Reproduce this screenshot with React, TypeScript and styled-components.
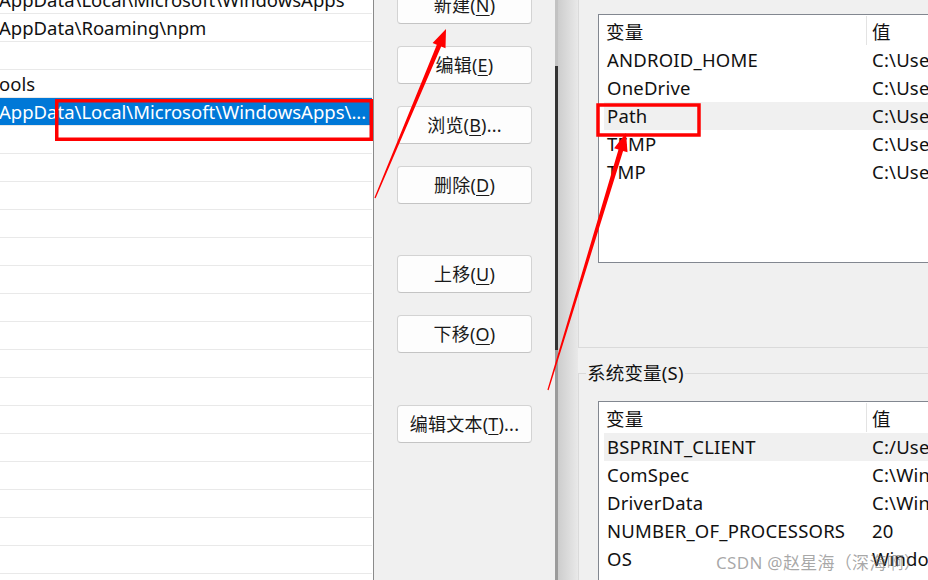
import React from "react";
import styled, { createGlobalStyle } from "styled-components";

const GlobalStyle = createGlobalStyle`
  html, body {
    margin: 0;
    padding: 0;
    width: 928px;
    height: 580px;
    overflow: hidden;
    background: #f0f0f0;
  }
  * { box-sizing: border-box; }
`;

const FONT = `"Noto Sans", "Noto Sans CJK SC", sans-serif`;

const Screen = styled.div`
  position: relative;
  display: flex;
  width: 928px;
  height: 580px;
  overflow: hidden;
  background: #f0f0f0;
  font-family: ${FONT};
  font-size: 18.5px;
  letter-spacing: 0.2px;
  color: #111;
`;

/* ---------- path list on the left ---------- */

const PathList = styled.div`
  flex: none;
  width: 374px;
  background: #fff;
  border-right: 1px solid #8a8a8a;
  overflow: hidden;
  letter-spacing: 0;
`;

const PathRows = styled.div`
  margin-top: -14px;
`;

const PathRow = styled.div<{ $selected?: boolean }>`
  height: 28px;
  margin-right: 1px;
  border-bottom: 1px solid #e9e9e9;
  display: flex;
  align-items: center;
  white-space: nowrap;
  overflow: hidden;
  line-height: 26px;
  text-indent: -1px;
  background: ${(p) => (p.$selected ? "#0078d7" : "transparent")};
  color: ${(p) => (p.$selected ? "#fff" : "inherit")};
`;

/* ---------- button column ---------- */

const ButtonColumn = styled.div`
  flex: none;
  width: 181px;
  display: flex;
  flex-direction: column;
  align-items: flex-start;
  padding-left: 23px;
  background: #f0f0f0;
`;

const ActionButton = styled.button<{ $gap: number }>`
  flex: none;
  margin-top: ${(p) => p.$gap}px;
  width: 135px;
  height: 38px;
  padding: 0;
  border: 1px solid #d3d3d3;
  border-bottom-color: #c4c4c4;
  border-radius: 4px;
  background: #fdfdfd;
  font-family: ${FONT};
  font-size: 18px;
  letter-spacing: 0.2px;
  color: #1a1a1a;
  display: flex;
  align-items: center;
  justify-content: center;
  line-height: 1;

  u {
    text-decoration-thickness: 1px;
    text-underline-offset: 3px;
  }
`;

/* ---------- edge of the window behind ---------- */

const FrameEdge = styled.div`
  flex: none;
  width: 3px;
  display: flex;
  flex-direction: column;
`;

const EdgeSegment = styled.div<{ $color: string; $height?: number }>`
  flex: ${(p) => (p.$height ? `none` : `1`)};
  height: ${(p) => (p.$height ? `${p.$height}px` : "auto")};
  background: ${(p) => p.$color};
`;

const FrameShadow = styled.div`
  flex: none;
  width: 20px;
  background: linear-gradient(to right, #cdcdcd, #e9e9e9);
`;

/* ---------- environment variables window ---------- */

const EnvWindow = styled.div`
  flex: none;
  width: 420px;
  display: flex;
  flex-direction: column;
  background: #f0f0f0;
`;

const GroupBox = styled.div<{ $openTop?: boolean; $gapTop?: number; $padTop: number; $padBottom?: number }>`
  position: relative;
  margin-top: ${(p) => p.$gapTop ?? 0}px;
  border: 1px solid #dadada;
  border-top: ${(p) => (p.$openTop ? "none" : "1px solid #dadada")};
  padding: ${(p) => p.$padTop}px 0 ${(p) => p.$padBottom ?? 0}px 19px;
`;

const GroupTitle = styled.div`
  position: absolute;
  top: -13px;
  left: 7px;
  padding: 0 1px;
  line-height: 24px;
  background: #f0f0f0;
  white-space: nowrap;
`;

const ListBox = styled.div<{ $height: number }>`
  width: 400px;
  height: ${(p) => p.$height}px;
  background: #fff;
  border: 1px solid #828790;
  overflow: hidden;
`;

const ListHeader = styled.div`
  display: grid;
  grid-template-columns: 268px 1fr;
  height: 31px;
`;

const HeaderCell = styled.div<{ $divider?: boolean; $pad: number }>`
  display: flex;
  align-items: center;
  margin: 1px 0;
  padding-left: ${(p) => p.$pad}px;
  border-right: ${(p) => (p.$divider ? "1px solid #e3e3e3" : "none")};
  white-space: nowrap;
`;

const VarRow = styled.div<{ $highlight?: boolean }>`
  display: grid;
  grid-template-columns: 262px 1fr;
  height: 28px;
  margin-left: 5px;
  align-items: center;
  line-height: 26px;
  white-space: nowrap;
  background: ${(p) => (p.$highlight ? "#f0f0f0" : "transparent")};
`;

const VarCell = styled.div<{ $pad: number }>`
  padding-left: ${(p) => p.$pad}px;
  overflow: hidden;
`;

/* ---------- overlays ---------- */

const Watermark = styled.div`
  position: absolute;
  left: 716px;
  top: 552px;
  font-family: ${FONT};
  font-size: 17px;
  letter-spacing: 0.3px;
  line-height: 22px;
  color: rgba(110, 110, 110, 0.6);
  white-space: nowrap;
  pointer-events: none;
`;

const Annotations = styled.svg`
  position: absolute;
  left: 0;
  top: 0;
  width: 928px;
  height: 580px;
  pointer-events: none;
`;

type Pt = [number, number];

function arrowPolygon(tail: Pt, tip: Pt, headLen = 18, headHalf = 7, shaftHalf = 2.4, tailHalf = 0.6): string {
  const dx = tip[0] - tail[0];
  const dy = tip[1] - tail[1];
  const len = Math.hypot(dx, dy);
  const ux = dx / len;
  const uy = dy / len;
  const nx = -uy;
  const ny = ux;
  const bx = tip[0] - ux * headLen;
  const by = tip[1] - uy * headLen;
  const pts: Pt[] = [
    [tail[0] + nx * tailHalf, tail[1] + ny * tailHalf],
    [bx + nx * shaftHalf, by + ny * shaftHalf],
    [bx + nx * headHalf, by + ny * headHalf],
    tip,
    [bx - nx * headHalf, by - ny * headHalf],
    [bx - nx * shaftHalf, by - ny * shaftHalf],
    [tail[0] - nx * tailHalf, tail[1] - ny * tailHalf],
  ];
  return pts.map((p) => `${p[0].toFixed(1)},${p[1].toFixed(1)}`).join(" ");
}

const pathEntries: { text: string; selected?: boolean }[] = [
  { text: "AppData\\Local\\Microsoft\\WindowsApps" },
  { text: "AppData\\Roaming\\npm" },
  { text: "" },
  { text: "ools" },
  { text: "AppData\\Local\\Microsoft\\WindowsApps\\...", selected: true },
  ...Array.from({ length: 17 }, () => ({ text: "" })),
];

const buttons: { label: string; key: string; tail?: string; gap: number }[] = [
  { label: "新建", key: "N", gap: -14 },
  { label: "编辑", key: "E", gap: 22 },
  { label: "浏览", key: "B", tail: "...", gap: 22 },
  { label: "删除", key: "D", gap: 22 },
  { label: "上移", key: "U", gap: 51 },
  { label: "下移", key: "O", gap: 22 },
  { label: "编辑文本", key: "T", tail: "...", gap: 52 },
];

const userVars: { name: string; value: string; highlight?: boolean }[] = [
  { name: "ANDROID_HOME", value: "C:\\Users" },
  { name: "OneDrive", value: "C:\\Users" },
  { name: "Path", value: "C:\\Users", highlight: true },
  { name: "TEMP", value: "C:\\Users" },
  { name: "TMP", value: "C:\\Users" },
];

const systemVars: { name: string; value: string; highlight?: boolean }[] = [
  { name: "BSPRINT_CLIENT", value: "C:/Users", highlight: true },
  { name: "ComSpec", value: "C:\\Windows" },
  { name: "DriverData", value: "C:\\Windows" },
  { name: "NUMBER_OF_PROCESSORS", value: "20" },
  { name: "OS", value: "Windows_NT" },
];

function VarList({ rows, height }: { rows: typeof userVars; height: number }) {
  return (
    <ListBox $height={height}>
      <ListHeader>
        <HeaderCell $divider $pad={7}>变量</HeaderCell>
        <HeaderCell $pad={5}>值</HeaderCell>
      </ListHeader>
      {rows.map((r) => (
        <VarRow key={r.name} $highlight={r.highlight}>
          <VarCell $pad={3}>{r.name}</VarCell>
          <VarCell $pad={6}>{r.value}</VarCell>
        </VarRow>
      ))}
    </ListBox>
  );
}

export default function App() {
  return (
    <>
      <GlobalStyle />
      <Screen>
        <PathList>
          <PathRows>
            {pathEntries.map((e, i) => (
              <PathRow key={i} $selected={e.selected}>
                {e.text}
              </PathRow>
            ))}
          </PathRows>
        </PathList>

        <ButtonColumn>
          {buttons.map((b) => (
            <ActionButton key={b.label} $gap={b.gap} type="button">
              {b.label}(<u>{b.key}</u>){b.tail ?? ""}
            </ActionButton>
          ))}
        </ButtonColumn>

        <FrameEdge>
          <EdgeSegment $color="#c2c2c2" $height={66} />
          <EdgeSegment $color="#333333" $height={284} />
          <EdgeSegment $color="#9b9b9b" />
        </FrameEdge>
        <FrameShadow />

        <EnvWindow>
          <GroupBox $openTop $padTop={14} $padBottom={84}>
            <VarList rows={userVars} height={249} />
          </GroupBox>
          <GroupBox $gapTop={25} $padTop={27}>
            <GroupTitle>系统变量(S)</GroupTitle>
            <VarList rows={systemVars} height={220} />
          </GroupBox>
        </EnvWindow>

        <Watermark>CSDN @赵星海（深海啊）</Watermark>

        <Annotations viewBox="0 0 928 580">
          <rect x={56.75} y={100.75} width={314.5} height={38.5} fill="none" stroke="#ff0000" strokeWidth={3.5} />
          <rect x={598} y={105} width={101} height={30} fill="none" stroke="#ff0000" strokeWidth={3.5} />
          <polygon points={arrowPolygon([375, 198], [446, 29])} fill="#ff0000" />
          <polygon points={arrowPolygon([548, 390], [626, 133])} fill="#ff0000" />
        </Annotations>
      </Screen>
    </>
  );
}
